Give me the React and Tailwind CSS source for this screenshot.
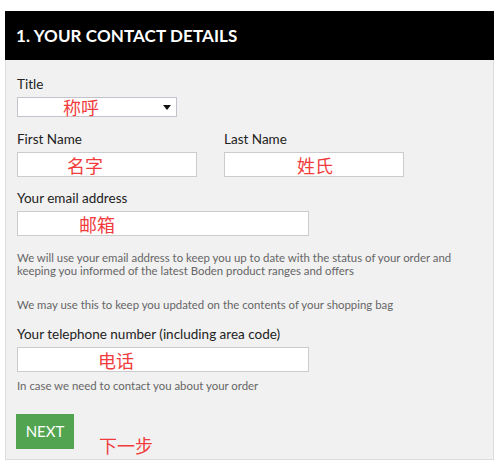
import React from 'react';

const cjk = "font-['Noto_Sans_CJK_SC',sans-serif]";

function Box({ width, pad, text }) {
    return (
        <div className={`h-[25px] border border-[#cccccc] bg-white ${width} flex items-center`}>
            <span className={`${pad} ${cjk} text-[18px] leading-none text-[#f03c3c]`}>{text}</span>
        </div>
    );
}

export default function App() {
    return (
        <div className="min-h-screen bg-white pt-[11px] font-['Lato',sans-serif]">
            <div className="ml-[5px] w-[489px] h-[449px] border border-[#dddddd] bg-[#f1f1f1]">
                <div className="h-[49px] bg-black flex items-center pl-[11px] -mt-px -mx-px">
                    <h1 className="text-[17px] font-bold tracking-[0.1px] text-white">1. YOUR CONTACT DETAILS</h1>
                </div>

                <div className="px-[11px] text-[#222222]">
                    <label className="block mt-[16px] text-[13.5px] leading-[16px]">Title</label>
                    <div className="mt-[5px] w-[160px] h-[20px] border border-[#c3c3cc] bg-white flex items-center">
                        <span className={`pl-[45px] ${cjk} text-[18px] leading-none text-[#f03c3c]`}>称呼</span>
                        <svg className="ml-auto mr-[5px]" width="8" height="5" viewBox="0 0 8 5">
                            <path d="M0 0h8L4 5z" fill="#111" />
                        </svg>
                    </div>

                    <div className="flex gap-[27px] mt-[14px]">
                        <div>
                            <label className="block text-[13.5px] leading-[16px]">First Name</label>
                            <div className="mt-[5px]"><Box width="w-[180px]" pad="pl-[49px]" text="名字" /></div>
                        </div>
                        <div>
                            <label className="block text-[13.5px] leading-[16px]">Last Name</label>
                            <div className="mt-[5px]"><Box width="w-[180px]" pad="pl-[72px]" text="姓氏" /></div>
                        </div>
                    </div>

                    <label className="block mt-[13px] text-[13.5px] leading-[16px]">Your email address</label>
                    <div className="mt-[5px]"><Box width="w-[292px]" pad="pl-[61px]" text="邮箱" /></div>

                    <p className="mt-[15px] max-w-[440px] text-[11.4px] leading-[13px] text-[#666666]">
                        We will use your email address to keep you up to date with the status of your order and keeping you informed of the latest Boden product ranges and offers
                    </p>
                    <p className="mt-[21px] text-[11.4px] leading-[13px] text-[#666666]">
                        We may use this to keep you updated on the contents of your shopping bag
                    </p>

                    <label className="block mt-[15px] text-[13.5px] leading-[16px]">Your telephone number (including area code)</label>
                    <div className="mt-[5px]"><Box width="w-[292px]" pad="pl-[80px]" text="电话" /></div>
                    <p className="mt-[7px] text-[11.4px] leading-[13px] text-[#666666]">In case we need to contact you about your order</p>

                    <div className="flex mt-[22px] -ml-px">
                        <button className="w-[58px] h-[35px] bg-[#53a451] text-white text-[15px] leading-none">NEXT</button>
                        <span className={`ml-[25px] pt-[22px] ${cjk} text-[18px] leading-none text-[#f03c3c]`}>下一步</span>
                    </div>
                </div>
            </div>
        </div>
    );
}
